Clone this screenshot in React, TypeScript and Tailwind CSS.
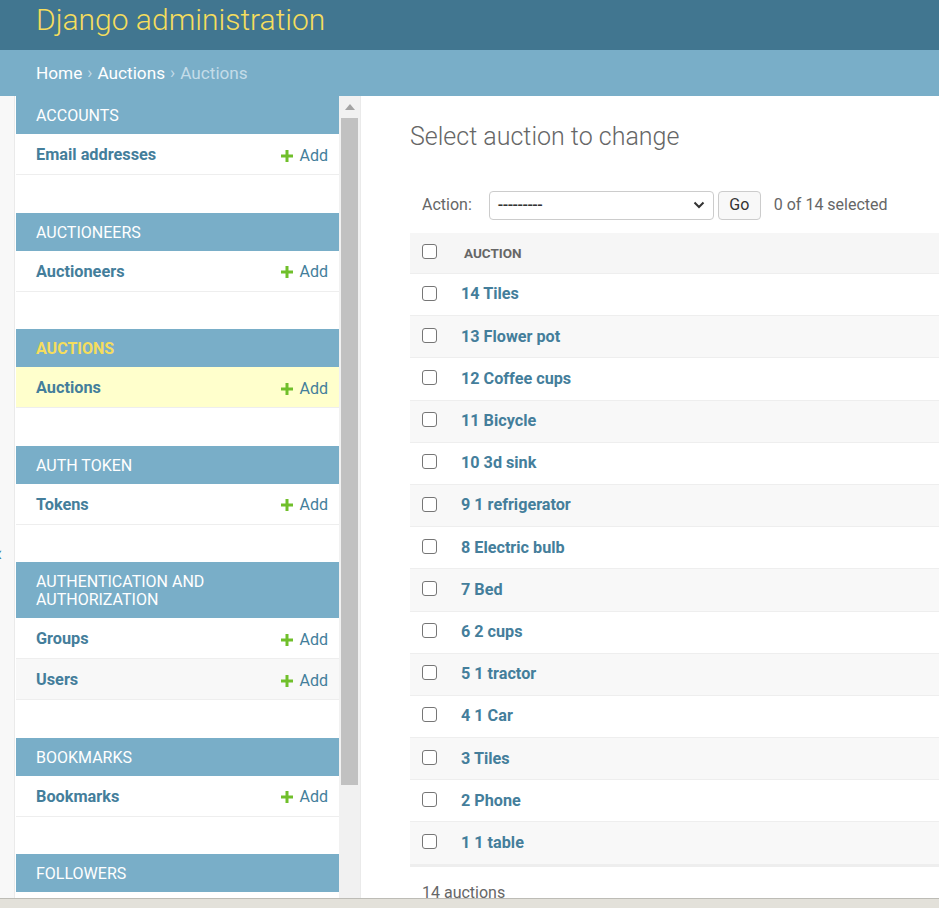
import React from "react";

const Plus = () => (
  <svg width="12" height="12" viewBox="0 0 12 12" className="shrink-0">
    <rect x="4.5" y="0" width="3" height="12" fill="#70bf2b" />
    <rect x="0" y="4.5" width="12" height="3" fill="#70bf2b" />
  </svg>
);

type Mod = { name: string; rows: string[]; active?: boolean };

const modules: Mod[] = [
  { name: "Accounts", rows: ["Email addresses"] },
  { name: "Auctioneers", rows: ["Auctioneers"] },
  { name: "Auctions", rows: ["Auctions"], active: true },
  { name: "Auth Token", rows: ["Tokens"] },
  { name: "Authentication and Authorization", rows: ["Groups", "Users"] },
  { name: "Bookmarks", rows: ["Bookmarks"] },
  { name: "Followers", rows: [] },
];

const auctions = [
  "14 Tiles",
  "13 Flower pot",
  "12 Coffee cups",
  "11 Bicycle",
  "10 3d sink",
  "9 1 refrigerator",
  "8 Electric bulb",
  "7 Bed",
  "6 2 cups",
  "5 1 tractor",
  "4 1 Car",
  "3 Tiles",
  "2 Phone",
  "1 1 table",
];

const Check = () => (
  <div className="w-[15px] h-[15px] border border-[#767676] rounded-[3px] bg-white shrink-0" />
);

export default function App() {
  return (
    <div className="w-[939px] h-[908px] overflow-hidden flex flex-col bg-white font-[Roboto,sans-serif]">
      <div className="h-[50px] shrink-0 bg-[#417690] px-[36px] flex items-center">
        <h1 className="text-[30px] font-light text-[#f5dd5d] leading-none -mt-[10px]">Django administration</h1>
      </div>
      <div className="h-[46px] shrink-0 bg-[#79aec8] px-[36px] flex items-center text-[17.2px] text-white">
        <span className="mt-[1px]">Home</span>
        <span className="text-[#c4dce8] mx-[5px]">›</span>
        <span className="mt-[1px]">Auctions</span>
        <span className="text-[#c4dce8] mx-[5px]">›</span>
        <span className="text-[#c4dce8] mt-[1px]">Auctions</span>
      </div>
      <div className="flex flex-1 min-h-0">
        <div className="w-[15px] shrink-0 bg-[#f8f8f8] border-r border-[#eaeaea] overflow-hidden">
          <div className="pt-[447px] -ml-[8px] text-[22px] leading-none text-[#447e9b]">«</div>
        </div>
        <div className="w-[346px] shrink-0 flex border-r border-[#eaeaea] overflow-hidden">
          <div className="w-[324px] pl-[1px] shrink-0 overflow-hidden">
            {modules.map((m) => (
              <div key={m.name} className="mb-[37.5px]">
                <div
                  className={
                    "bg-[#79aec8] px-[20px] pt-[11px] pb-[9px] leading-[18px] text-[16px] uppercase " +
                    (m.active ? "text-[#f5dd5d] font-bold" : "text-white")
                  }
                >
                  {m.name === "Authentication and Authorization" ? (
                    <>
                      AUTHENTICATION AND
                      <br />
                      AUTHORIZATION
                    </>
                  ) : (
                    m.name
                  )}
                </div>
                {m.rows.map((r, i) => (
                  <div
                    key={r}
                    className={
                      "h-[41px] pt-[3px] border-b border-[#eeeeee] flex items-center justify-between pl-[20px] pr-[11px] " +
                      (m.active ? "bg-[#ffffcc]" : i % 2 === 1 ? "bg-[#f8f8f8]" : "bg-white")
                    }
                  >
                    <span className="text-[16.3px] font-bold text-[#447e9b]">{r}</span>
                    <span className="flex items-center gap-[7px] text-[16px] text-[#447e9b]">
                      <Plus />
                      Add
                    </span>
                  </div>
                ))}
              </div>
            ))}
          </div>
          <div className="w-[21px] shrink-0 bg-[#f1f1f1] flex flex-col items-center">
            <div className="h-[22px] flex items-center justify-center">
              <svg width="10" height="6" viewBox="0 0 10 6">
                <polygon points="5,0 10,6 0,6" fill="#a3a3a3" />
              </svg>
            </div>
            <div className="w-[17px] h-[667px] bg-[#c1c1c1]" />
          </div>
        </div>
        <div className="flex-1 min-w-0 pl-[49px] pt-[24px] overflow-hidden">
          <h1 className="text-[25px] font-light leading-[32px] text-[#666666] mt-[1px]">Select auction to change</h1>
          <div className="mt-[37px] h-[30px] flex items-center pl-[12px] text-[16px] text-[#666666]">
            <span>Action:</span>
            <div className="ml-[17px] w-[225px] h-[29px] border border-[#cccccc] rounded-[4px] bg-white flex items-center justify-between pl-[8px] pr-[8px] text-[#333333]">
              <span className="text-[16px] font-medium tracking-[-0.5px]">---------</span>
              <svg width="12" height="8" viewBox="0 0 12 8">
                <path d="M1.5 1.5 L6 6 L10.5 1.5" fill="none" stroke="#333" strokeWidth="2" />
              </svg>
            </div>
            <div className="ml-[4px] w-[43px] h-[29px] border border-[#cccccc] rounded-[4px] bg-[#f8f8f8] flex items-center justify-center text-[#333333]">
              Go
            </div>
            <span className="ml-[13px]">0 of 14 selected</span>
          </div>
          <div className="mt-[13px] w-[700px]">
            <div className="h-[41px] bg-[#f6f6f6] border-b border-[#eeeeee] flex items-center pl-[12px]">
              <div className="-mt-[4px]">
                <Check />
              </div>
              <span className="ml-[27px] text-[13.5px] font-bold text-[#666666] uppercase">Auction</span>
            </div>
            {auctions.map((a, i) => (
              <div
                key={a}
                className={
                  "h-[42.2px] border-b border-[#eeeeee] flex items-center pl-[12px] " +
                  (i % 2 === 1 ? "bg-[#f8f8f8]" : "bg-white")
                }
              >
                <div className="-mt-[3px]">
                  <Check />
                </div>
                <span className="ml-[24px] text-[16.2px] font-bold text-[#447e9b]">{a}</span>
              </div>
            ))}
            <div className="h-[2px] bg-[#eeeeee]" />
            <div className="pl-[12px] pt-[16px] text-[16px] leading-[20px] text-[#666666]">14 auctions</div>
          </div>
        </div>
      </div>
      <div className="h-[10px] shrink-0 border-t border-[#bdbcb6] bg-[#e3e1da]" />
    </div>
  );
}
